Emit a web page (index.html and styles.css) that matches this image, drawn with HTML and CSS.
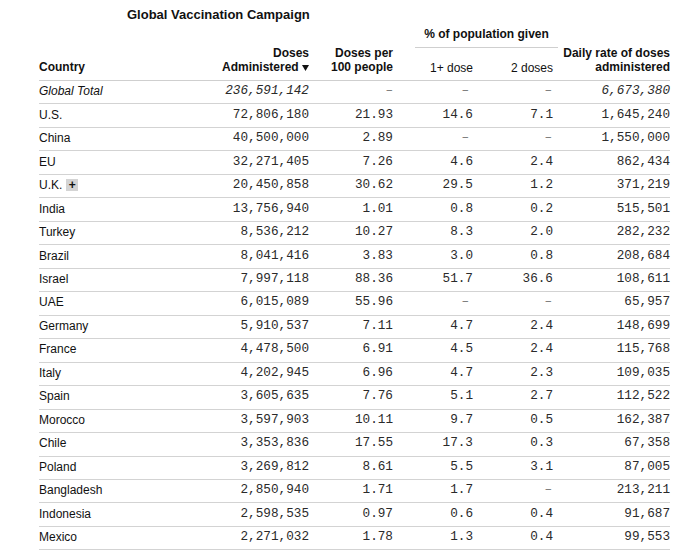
FILE: index.html
```html
<!DOCTYPE html>
<html>
<head>
<meta charset="utf-8">
<link rel="stylesheet" href="styles.css">
</head>
<body>
<div class="page">
  <h1 class="title">Global Vaccination Campaign</h1>
  <div class="table">
    <div class="thead">
      <div class="th c1">Country</div>
      <div class="th c2 right">Doses<br>Administered <svg class="sort" width="7" height="6" viewBox="0 0 7 6"><path d="M0 0 H7 L3.5 6 Z" fill="#111"/></svg></div>
      <div class="th c3 right">Doses per<br>100 people</div>
      <div class="group"><span class="group-label">% of population given</span></div>
      <div class="sub c4">1+ dose</div>
      <div class="sub c5">2 doses</div>
      <div class="th c6 right">Daily rate of doses<br>administered</div>
    </div>

    <div class="row total">
      <div class="name">Global Total</div>
      <div class="num">236,591,142</div>
      <div class="num"><span class="na">–</span></div>
      <div class="num p4"><span class="na">–</span></div>
      <div class="num p5"><span class="na">–</span></div>
      <div class="num">6,673,380</div>
    </div>
    <div class="row"><div class="name">U.S.</div><div class="num">72,806,180</div><div class="num">21.93</div><div class="num">14.6</div><div class="num">7.1</div><div class="num">1,645,240</div></div>
    <div class="row"><div class="name">China</div><div class="num">40,500,000</div><div class="num">2.89</div><div class="num p4"><span class="na">–</span></div><div class="num p5"><span class="na">–</span></div><div class="num">1,550,000</div></div>
    <div class="row"><div class="name">EU</div><div class="num">32,271,405</div><div class="num">7.26</div><div class="num">4.6</div><div class="num">2.4</div><div class="num">862,434</div></div>
    <div class="row"><div class="name">U.K. <span class="badge">+</span></div><div class="num">20,450,858</div><div class="num">30.62</div><div class="num">29.5</div><div class="num">1.2</div><div class="num">371,219</div></div>
    <div class="row"><div class="name">India</div><div class="num">13,756,940</div><div class="num">1.01</div><div class="num">0.8</div><div class="num">0.2</div><div class="num">515,501</div></div>
    <div class="row"><div class="name">Turkey</div><div class="num">8,536,212</div><div class="num">10.27</div><div class="num">8.3</div><div class="num">2.0</div><div class="num">282,232</div></div>
    <div class="row"><div class="name">Brazil</div><div class="num">8,041,416</div><div class="num">3.83</div><div class="num">3.0</div><div class="num">0.8</div><div class="num">208,684</div></div>
    <div class="row"><div class="name">Israel</div><div class="num">7,997,118</div><div class="num">88.36</div><div class="num">51.7</div><div class="num">36.6</div><div class="num">108,611</div></div>
    <div class="row"><div class="name">UAE</div><div class="num">6,015,089</div><div class="num">55.96</div><div class="num p4"><span class="na">–</span></div><div class="num p5"><span class="na">–</span></div><div class="num">65,957</div></div>
    <div class="row"><div class="name">Germany</div><div class="num">5,910,537</div><div class="num">7.11</div><div class="num">4.7</div><div class="num">2.4</div><div class="num">148,699</div></div>
    <div class="row"><div class="name">France</div><div class="num">4,478,500</div><div class="num">6.91</div><div class="num">4.5</div><div class="num">2.4</div><div class="num">115,768</div></div>
    <div class="row"><div class="name">Italy</div><div class="num">4,202,945</div><div class="num">6.96</div><div class="num">4.7</div><div class="num">2.3</div><div class="num">109,035</div></div>
    <div class="row"><div class="name">Spain</div><div class="num">3,605,635</div><div class="num">7.76</div><div class="num">5.1</div><div class="num">2.7</div><div class="num">112,522</div></div>
    <div class="row"><div class="name">Morocco</div><div class="num">3,597,903</div><div class="num">10.11</div><div class="num">9.7</div><div class="num">0.5</div><div class="num">162,387</div></div>
    <div class="row"><div class="name">Chile</div><div class="num">3,353,836</div><div class="num">17.55</div><div class="num">17.3</div><div class="num">0.3</div><div class="num">67,358</div></div>
    <div class="row"><div class="name">Poland</div><div class="num">3,269,812</div><div class="num">8.61</div><div class="num">5.5</div><div class="num">3.1</div><div class="num">87,005</div></div>
    <div class="row"><div class="name">Bangladesh</div><div class="num">2,850,940</div><div class="num">1.71</div><div class="num">1.7</div><div class="num p5"><span class="na">–</span></div><div class="num">213,211</div></div>
    <div class="row"><div class="name">Indonesia</div><div class="num">2,598,535</div><div class="num">0.97</div><div class="num">0.6</div><div class="num">0.4</div><div class="num">91,687</div></div>
    <div class="row"><div class="name">Mexico</div><div class="num">2,271,032</div><div class="num">1.78</div><div class="num">1.3</div><div class="num">0.4</div><div class="num">99,553</div></div>
  </div>
</div>
</body>
</html>
```

FILE: styles.css
```css
html, body {
  margin: 0;
  padding: 0;
  background: #ffffff;
}

body {
  font-family: "Liberation Sans", Arial, sans-serif;
  color: #111;
}

.page {
  padding-left: 39px;
  width: 631px;
}

.title {
  margin: 0;
  padding: 7px 0 0 88px;
  font-size: 13px;
  line-height: 16px;
  font-weight: bold;
  color: #111;
}

.table {
  width: 631px;
}

.thead,
.row {
  display: grid;
  grid-template-columns: 170px 100px 84px 80px 80px 117px;
}

.thead {
  grid-template-rows: auto auto;
  padding-top: 4px;
  border-bottom: 1px solid #cfcfcf;
  font-size: 12px;
  line-height: 14px;
}

.th {
  grid-row: 1 / 3;
  align-self: end;
  font-weight: bold;
  padding-bottom: 6px;
  white-space: nowrap;
}

.right {
  text-align: right;
}

.c1 { grid-column: 1; }
.c2 { grid-column: 2; }
.c3 { grid-column: 3; }
.c4 { grid-column: 4; }
.c5 { grid-column: 5; }
.c6 { grid-column: 6; }

.sort {
  vertical-align: 0px;
}

.group {
  grid-column: 4 / 6;
  grid-row: 1;
  margin-left: 22px;
  margin-right: -5px;
  padding-bottom: 6px;
  border-bottom: 1px solid #cfcfcf;
  text-align: center;
  font-weight: bold;
  white-space: nowrap;
}

.sub {
  grid-row: 2;
  align-self: end;
  text-align: right;
  padding-top: 13px;
  padding-bottom: 5px;
  font-weight: normal;
  white-space: nowrap;
}

.row {
  box-sizing: border-box;
  height: 23.47px;
  padding-bottom: 2px;
  align-items: center;
  border-bottom: 1px solid #d3d3d3;
}

.name {
  font-size: 12px;
  line-height: 14px;
  color: #111;
  display: flex;
  align-items: center;
}

.num {
  font-family: "Liberation Mono", "Courier New", monospace;
  font-size: 12.7px;
  line-height: 14px;
  text-align: right;
  color: #2a2a2a;
}

.total .name,
.total .num {
  font-style: italic;
}

.na {
  color: #777;
  font-style: normal;
}

.p4 .na { padding-right: 4px; }
.p5 .na { padding-right: 1px; }

.badge {
  display: inline-block;
  width: 12px;
  height: 12px;
  margin-left: 4px;
  background: #d4d4d4;
  color: #111;
  font-size: 12px;
  font-weight: bold;
  line-height: 12px;
  text-align: center;
}
```
